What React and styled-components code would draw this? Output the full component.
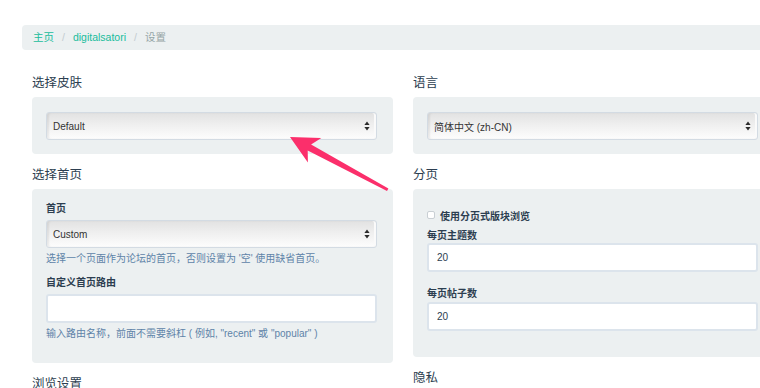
import React from "react";
import styled, { createGlobalStyle } from "styled-components";

const Global = createGlobalStyle`
  html, body { margin: 0; padding: 0; background: #fff; }
  body { overflow: hidden; width: 760px; height: 388px; }
  #root { position: relative; width: 760px; height: 388px; overflow: hidden; }
  * { box-sizing: border-box; }
`;

const FONT = `"Liberation Sans", Arial, "Noto Sans CJK SC", sans-serif`;

const Page = styled.div`
  padding: 25px 0 0 22px;
  font-family: ${FONT};
  color: #2c3e50;
  width: 820px;
`;

const Breadcrumb = styled.nav`
  display: flex;
  align-items: center;
  height: 25px;
  width: 790px;
  padding-left: 11px;
  background: #ecf0f1;
  border-radius: 4px;
  font-size: 10.5px;
  line-height: 25px;
`;

const Crumb = styled.span`
  color: ${(p) => (p.$active ? "#95a5a6" : "#18bc9c")};
`;

const Sep = styled.span`
  color: #c3cbd0;
  margin: 0 8px;
`;

const Columns = styled.div`
  display: grid;
  grid-template-columns: 361px 361px;
  column-gap: 20px;
  padding-left: 10px;
  align-items: start;
`;

const Column = styled.div`
  display: flex;
  flex-direction: column;
`;

const Heading = styled.h3`
  margin: ${(p) => (p.$first ? "25px" : "13px")} 0 6px;
  font-size: 12.5px;
  line-height: 16px;
  font-weight: 400;
  color: #2c3e50;
`;

const Well = styled.div`
  background: #ecf0f1;
  border-radius: 4px;
  padding: ${(p) => p.$pad};
  display: flex;
  flex-direction: column;
`;

const SelectBox = styled.div`
  height: 28px;
  margin-top: ${(p) => p.$mt || 0}px;
  display: flex;
  align-items: center;
  justify-content: space-between;
  padding: 0 6px 0 6px;
  border: 1px solid #d3dbe3;
  border-radius: 3px;
  background: linear-gradient(to bottom, #e2e2e2 0%, #efefef 45%, #fdfdfd 100%);
  box-shadow: inset 2px 0 2px rgba(0, 0, 0, 0.07), inset -2px 0 0 #fafafa;
  font-size: 10px;
  color: #333;
`;

const Label = styled.div`
  font-size: 10px;
  line-height: 14px;
  font-weight: 700;
  color: #2c3e50;
  margin-top: ${(p) => p.$mt || 0}px;
`;

const Help = styled.div`
  font-size: 10px;
  line-height: 14px;
  color: #5e83a8;
  margin-top: ${(p) => p.$mt || 0}px;
  white-space: nowrap;
`;

const TextInput = styled.div`
  height: 29px;
  margin-top: ${(p) => p.$mt || 0}px;
  background: #fff;
  border: 2px solid #dce4ec;
  border-radius: 3px;
  display: flex;
  align-items: center;
  padding-left: 8px;
  font-size: 10px;
  color: #2c3e50;
`;

const CheckRow = styled.label`
  display: flex;
  align-items: center;
  gap: 5px;
  height: 14px;
  margin-top: ${(p) => p.$mt || 0}px;
  font-size: 10px;
  font-weight: 700;
  color: #2c3e50;
`;

const CheckBox = styled.span`
  width: 8px;
  height: 8px;
  border: 1px solid #c9cfd4;
  border-radius: 2px;
  background: #fff;
`;

const ArrowLayer = styled.svg`
  position: absolute;
  left: 0;
  top: 0;
  pointer-events: none;
`;

const Updown = () => (
  <svg width="6" height="10" viewBox="0 0 6 10">
    <path d="M3 0.5 L5.6 4 H0.4 Z" fill="#2b2b2b" />
    <path d="M3 9.5 L5.6 6 H0.4 Z" fill="#2b2b2b" />
  </svg>
);

const Select = ({ value, mt }) => (
  <SelectBox $mt={mt}>
    <span>{value}</span>
    <Updown />
  </SelectBox>
);

export default function App() {
  return (
    <>
      <Global />
      <Page>
        <Breadcrumb>
          <Crumb>主页</Crumb>
          <Sep>/</Sep>
          <Crumb>digitalsatori</Crumb>
          <Sep>/</Sep>
          <Crumb $active>设置</Crumb>
        </Breadcrumb>
        <Columns>
          <Column>
            <Heading $first>选择皮肤</Heading>
            <Well $pad="15px 16px 14px 14px">
              <Select value="Default" />
            </Well>
            <Heading>选择首页</Heading>
            <Well $pad="13px 16px 22px 14px">
              <Label>首页</Label>
              <Select value="Custom" mt={4} />
              <Help $mt={4}>选择一个页面作为论坛的首页，否则设置为 '空' 使用缺省首页。</Help>
              <Label $mt={10}>自定义首页路由</Label>
              <TextInput $mt={4} />
              <Help $mt={4}>输入路由名称，前面不需要斜杠 ( 例如, "recent" 或 "popular" )</Help>
            </Well>
            <Heading>浏览设置</Heading>
          </Column>
          <Column>
            <Heading $first>语言</Heading>
            <Well $pad="15px 16px 14px 14px">
              <Select value="简体中文 (zh-CN)" />
            </Well>
            <Heading>分页</Heading>
            <Well $pad="19px 16px 26px 14px">
              <CheckRow>
                <CheckBox />
                使用分页式版块浏览
              </CheckRow>
              <Label $mt={7}>每页主题数</Label>
              <TextInput>20</TextInput>
              <Label $mt={15}>每页帖子数</Label>
              <TextInput $mt={1}>20</TextInput>
            </Well>
            <Heading>隐私</Heading>
          </Column>
        </Columns>
      </Page>
      <ArrowLayer width="760" height="388" viewBox="0 0 760 388">
        <polygon
          points="290,137 321.3,138 311.1,144.4 388.4,188.5 387,191.1 307.7,150.6 307.9,162.6"
          fill="#fb2f6b"
        />
      </ArrowLayer>
    </>
  );
}
